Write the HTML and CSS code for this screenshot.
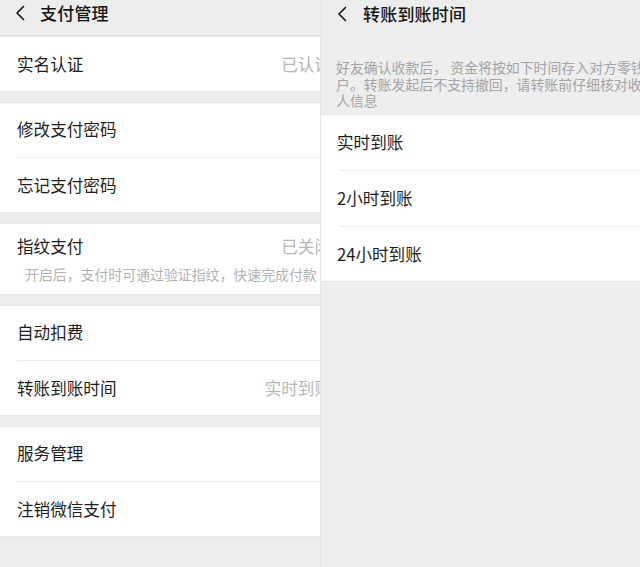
FILE: index.html
```html
<!DOCTYPE html>
<html lang="zh-CN">
<head>
<meta charset="utf-8">
<title>支付管理</title>
<link rel="stylesheet" href="styles.css">
</head>
<body>
<div class="screens">
  <section class="panel panel-left">
    <div class="inner">
      <header class="topbar">
        <svg class="back" width="12" height="16" viewBox="0 0 12 16"><path d="M9.5 1.5 L3 8 L9.5 14.5" fill="none" stroke="#1a1a1a" stroke-width="1.7" stroke-linecap="round" stroke-linejoin="round"/></svg>
        <h1 class="title">支付管理</h1>
      </header>

      <div class="card">
        <div class="row"><span class="label">实名认证</span><span class="value">已认证</span></div>
      </div>

      <div class="card">
        <div class="row"><span class="label">修改支付密码</span></div>
        <div class="row divided"><span class="label">忘记支付密码</span></div>
      </div>

      <div class="card">
        <div class="row tall">
          <div class="line"><span class="label">指纹支付</span><span class="value">已关闭</span></div>
          <p class="hint">开启后，支付时可通过验证指纹，快速完成付款</p>
        </div>
      </div>

      <div class="card">
        <div class="row"><span class="label">自动扣费</span></div>
        <div class="row divided"><span class="label">转账到账时间</span><span class="value">实时到账</span></div>
      </div>

      <div class="card">
        <div class="row"><span class="label">服务管理</span></div>
        <div class="row divided"><span class="label">注销微信支付</span></div>
      </div>
    </div>
  </section>

  <section class="panel panel-right">
    <div class="inner">
      <header class="topbar">
        <svg class="back" width="12" height="16" viewBox="0 0 12 16"><path d="M9.5 1.5 L3 8 L9.5 14.5" fill="none" stroke="#1a1a1a" stroke-width="1.7" stroke-linecap="round" stroke-linejoin="round"/></svg>
        <h1 class="title">转账到账时间</h1>
      </header>
      <p class="desc"><span>好友确认收款后， 资金将按如下时间存入对方零钱账</span><span>户。转账发起后不支持撤回，请转账前仔细核对收款</span><span>人信息</span></p>
      <div class="card">
        <div class="row r2"><span class="label">实时到账</span></div>
        <div class="row r2 divided"><span class="label">2小时到账</span></div>
        <div class="row r2 divided"><span class="label">24小时到账</span></div>
      </div>
    </div>
  </section>
</div>
</body>
</html>
```

FILE: styles.css
```css
html, body {
  margin: 0;
  padding: 0;
  background: #ededed;
}
body {
  font-family: "Noto Sans CJK SC", "Noto Sans", sans-serif;
  color: #1c1c1c;
  width: 640px;
  height: 567px;
  overflow: hidden;
}
.screens {
  display: flex;
  height: 567px;
}
.panel {
  overflow: hidden;
  height: 567px;
  background: #ededed;
}
.panel-left {
  width: 320px;
  flex: none;
}
.panel-right {
  flex: 1;
  background: #eeeeee;
  border-left: 1px solid #e6e6e6;
}
.panel-left .inner {
  width: 350px;
}
.panel-right .inner {
  width: 380px;
}
.topbar {
  display: flex;
  align-items: center;
  height: 36px;
  padding: 0 0 9px 14px;
  background: #ededed;
  box-sizing: border-box;
}
.panel-left .topbar {
  border-bottom: 1px solid #e2e2e2;
}
.back {
  flex: none;
  margin-right: 14px;
}
.title {
  margin: 0;
  font-size: 17px;
  font-weight: 500;
  line-height: 20px;
  color: #151515;
  letter-spacing: 0.2px;
}
.panel-right .back {
  margin-left: 1px;
  margin-right: 15px;
}
.card {
  background: #ffffff;
  box-shadow: inset 0 1px 0 #e8e8e8, inset 0 -1px 0 #e8e8e8;
  margin-bottom: 10px;
}
.row {
  display: flex;
  align-items: center;
  justify-content: space-between;
  height: 55.5px;
  padding: 0 19px 0 17px;
  box-sizing: border-box;
  position: relative;
}
.row.divided::before {
  content: "";
  position: absolute;
  left: 17px;
  right: 0;
  top: 0;
  border-top: 1px solid #ececec;
}
.label {
  font-size: 16.6px;
  line-height: 20px;
  color: #1e1e1e;
}
.value {
  font-size: 16.6px;
  line-height: 20px;
  color: #b6b6b6;
}
.row.tall {
  display: block;
  height: 72px;
  padding-top: 13px;
}
.row.tall .line {
  display: flex;
  justify-content: space-between;
  align-items: center;
  height: 20px;
}
.hint {
  margin: 9px 0 0 8px;
  font-size: 13.9px;
  line-height: 18px;
  color: #b2b2b2;
  white-space: nowrap;
}
.desc {
  margin: 0;
  padding: 23px 0 5px 15px;
  font-size: 13.9px;
  line-height: 16.5px;
  color: #a4a4a4;
  background: #eeeeee;
}
.desc span {
  display: block;
  white-space: nowrap;
}
.row.r2 {
  height: 56px;
  padding-left: 16px;
}
.panel-right .row.divided::before {
  left: 19px;
}
```
